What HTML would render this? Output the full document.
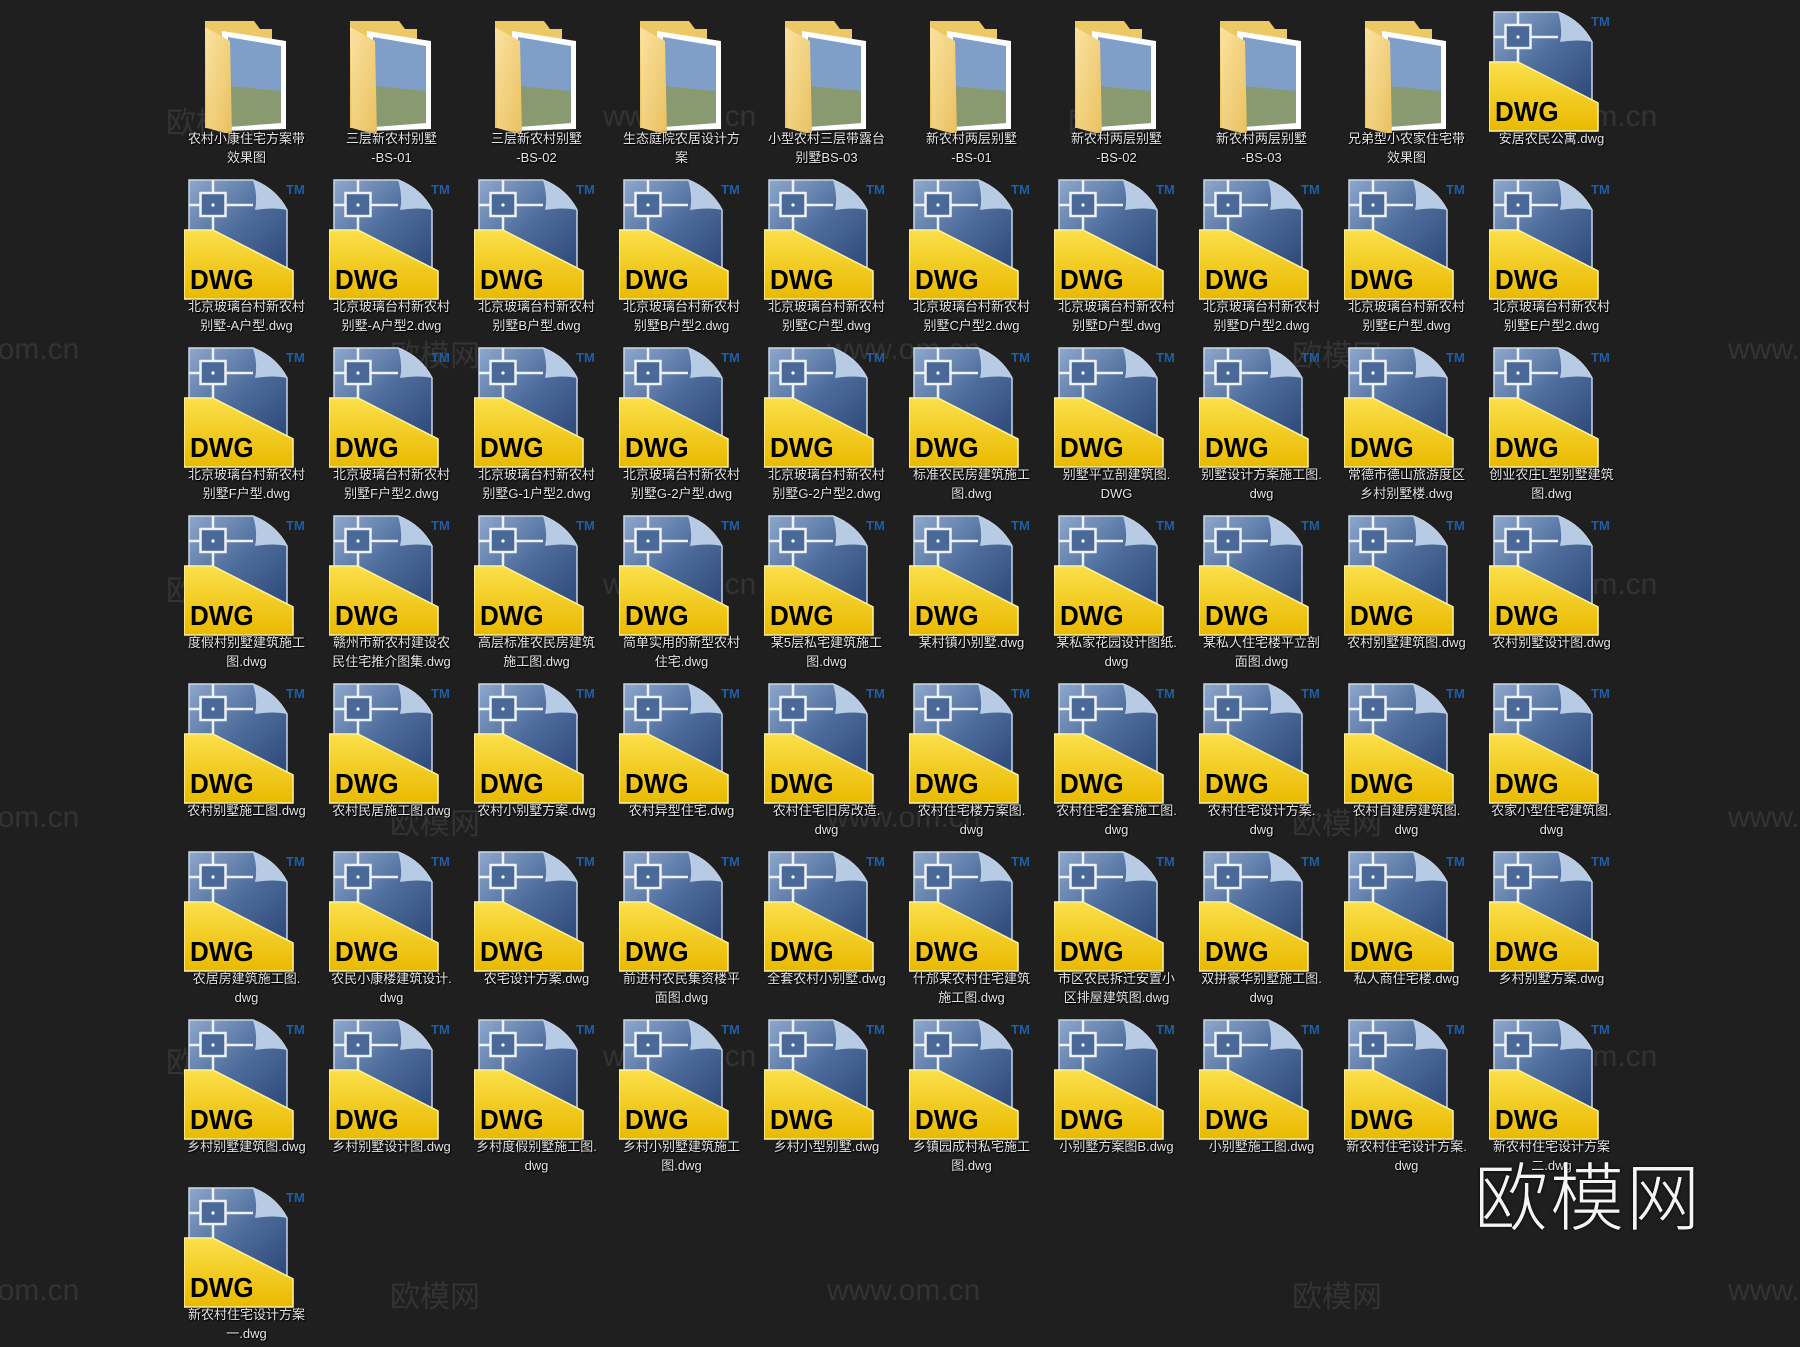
<!DOCTYPE html>
<html><head><meta charset="utf-8">
<style>
html,body{margin:0;padding:0}
body{width:1800px;height:1347px;background:#1f1f1f;position:relative;overflow:hidden;font-family:"Liberation Sans","Noto Sans CJK SC",sans-serif}
.it{position:absolute;width:145px;height:160px}
.ic{position:absolute;left:10px;top:0;width:128px;height:122px}
.dw{position:absolute;left:16px;top:86px;font:bold 28px "Liberation Sans",sans-serif;color:#000;line-height:30px;transform:scaleX(0.93);transform-origin:left}
.tm{position:absolute;left:112px;top:3px;font:bold 13px "Liberation Sans",sans-serif;color:#1d5ea8}
.lb{position:absolute;left:0;top:118px;width:145px;text-align:center;font-size:13px;line-height:19px;color:#e4e4e4;text-shadow:0 0 2px #000,1px 1px 1px #000;white-space:nowrap}
.wm{position:absolute;font-size:30px;color:rgba(255,255,255,0.09);font-family:"Liberation Sans","Noto Sans CJK SC",sans-serif;white-space:nowrap}
.big{position:absolute;left:1474px;top:1148px;font-size:74px;line-height:90px;color:#f4f4f4;font-family:"Noto Sans CJK SC",sans-serif;font-weight:300;letter-spacing:2px;text-shadow:0 0 3px #000}
</style></head><body>
<svg width="0" height="0" style="position:absolute">
<defs>
<linearGradient id="gb" x1="0" y1="0" x2="1" y2="1"><stop offset="0" stop-color="#8ea8cc"/><stop offset="0.5" stop-color="#4d6c9c"/><stop offset="1" stop-color="#2b4677"/></linearGradient>
<linearGradient id="gy" x1="0" y1="0" x2="0" y2="1"><stop offset="0" stop-color="#fbe04a"/><stop offset="1" stop-color="#e9b900"/></linearGradient>
<linearGradient id="gf" x1="0" y1="0" x2="1" y2="1"><stop offset="0" stop-color="#fbe3a0"/><stop offset="1" stop-color="#e9c060"/></linearGradient>
<symbol id="d" viewBox="0 0 128 122">
<path d="M5 1H69Q92 10 103 31V95H5Z" fill="url(#gb)" stroke="#c9d6e8" stroke-width="1.5"/>
<path d="M69 1Q74 18 71 31Q90 28 103 31Q92 10 69 1Z" fill="#b8cbe4"/>
<path d="M29 1V51M5 26H69" stroke="#eef2f7" stroke-width="2.5"/>
<rect x="16.5" y="14" width="25" height="23" fill="#4a6898" stroke="#eef2f7" stroke-width="2.5"/>
<circle cx="29" cy="26" r="1.6" fill="#fff"/>
<path d="M0 51H29L109 92V120H0Z" fill="url(#gy)" stroke="#fff3a0" stroke-width="1.5"/>
</symbol>
<symbol id="f" viewBox="0 0 128 122">
<path d="M21 10H70L76 18H88V117H21Z" fill="#efc866"/>
<path d="M38 20L102 30V118L38 120Z" fill="#fff"/>
<path d="M44 26L97 35V112L44 116Z" fill="#7f9fc8"/>
<path d="M44 75L97 80V112L44 116Z" fill="#8a9a70"/>
<path d="M21 16L46 30L48 124L23 117Z" fill="url(#gf)"/>
</symbol>
</defs></svg>

<div class="wm" style="left:166px;top:98px">欧模网</div>
<div class="wm" style="left:603px;top:100px">www.om.cn</div>
<div class="wm" style="left:1068px;top:98px">欧模网</div>
<div class="wm" style="left:1504px;top:100px">www.om.cn</div>
<div class="wm" style="left:-74px;top:333px">www.om.cn</div>
<div class="wm" style="left:390px;top:331px">欧模网</div>
<div class="wm" style="left:827px;top:333px">www.om.cn</div>
<div class="wm" style="left:1292px;top:331px">欧模网</div>
<div class="wm" style="left:1728px;top:333px">www.om.cn</div>
<div class="wm" style="left:166px;top:566px">欧模网</div>
<div class="wm" style="left:603px;top:568px">www.om.cn</div>
<div class="wm" style="left:1068px;top:566px">欧模网</div>
<div class="wm" style="left:1504px;top:568px">www.om.cn</div>
<div class="wm" style="left:-74px;top:801px">www.om.cn</div>
<div class="wm" style="left:390px;top:799px">欧模网</div>
<div class="wm" style="left:827px;top:801px">www.om.cn</div>
<div class="wm" style="left:1292px;top:799px">欧模网</div>
<div class="wm" style="left:1728px;top:801px">www.om.cn</div>
<div class="wm" style="left:166px;top:1038px">欧模网</div>
<div class="wm" style="left:603px;top:1040px">www.om.cn</div>
<div class="wm" style="left:1068px;top:1038px">欧模网</div>
<div class="wm" style="left:1504px;top:1040px">www.om.cn</div>
<div class="wm" style="left:-74px;top:1274px">www.om.cn</div>
<div class="wm" style="left:390px;top:1272px">欧模网</div>
<div class="wm" style="left:827px;top:1274px">www.om.cn</div>
<div class="wm" style="left:1292px;top:1272px">欧模网</div>
<div class="wm" style="left:1728px;top:1274px">www.om.cn</div>

<!-- Row 0 -->
<div class="it" style="left:174px;top:11px"><svg class="ic"><use href="#f"/></svg><div class="lb">农村小康住宅方案带<br>效果图</div></div>
<div class="it" style="left:319px;top:11px"><svg class="ic"><use href="#f"/></svg><div class="lb">三层新农村别墅<br>-BS-01</div></div>
<div class="it" style="left:464px;top:11px"><svg class="ic"><use href="#f"/></svg><div class="lb">三层新农村别墅<br>-BS-02</div></div>
<div class="it" style="left:609px;top:11px"><svg class="ic"><use href="#f"/></svg><div class="lb">生态庭院农居设计方<br>案</div></div>
<div class="it" style="left:754px;top:11px"><svg class="ic"><use href="#f"/></svg><div class="lb">小型农村三层带露台<br>别墅BS-03</div></div>
<div class="it" style="left:899px;top:11px"><svg class="ic"><use href="#f"/></svg><div class="lb">新农村两层别墅<br>-BS-01</div></div>
<div class="it" style="left:1044px;top:11px"><svg class="ic"><use href="#f"/></svg><div class="lb">新农村两层别墅<br>-BS-02</div></div>
<div class="it" style="left:1189px;top:11px"><svg class="ic"><use href="#f"/></svg><div class="lb">新农村两层别墅<br>-BS-03</div></div>
<div class="it" style="left:1334px;top:11px"><svg class="ic"><use href="#f"/></svg><div class="lb">兄弟型小农家住宅带<br>效果图</div></div>
<div class="it" style="left:1479px;top:11px"><svg class="ic"><use href="#d"/></svg><div class="dw">DWG</div><div class="tm">TM</div><div class="lb">安居农民公寓.dwg</div></div>

<!-- Row 1 -->
<div class="it" style="left:174px;top:179px"><svg class="ic"><use href="#d"/></svg><div class="dw">DWG</div><div class="tm">TM</div><div class="lb">北京玻璃台村新农村<br>别墅-A户型.dwg</div></div>
<div class="it" style="left:319px;top:179px"><svg class="ic"><use href="#d"/></svg><div class="dw">DWG</div><div class="tm">TM</div><div class="lb">北京玻璃台村新农村<br>别墅-A户型2.dwg</div></div>
<div class="it" style="left:464px;top:179px"><svg class="ic"><use href="#d"/></svg><div class="dw">DWG</div><div class="tm">TM</div><div class="lb">北京玻璃台村新农村<br>别墅B户型.dwg</div></div>
<div class="it" style="left:609px;top:179px"><svg class="ic"><use href="#d"/></svg><div class="dw">DWG</div><div class="tm">TM</div><div class="lb">北京玻璃台村新农村<br>别墅B户型2.dwg</div></div>
<div class="it" style="left:754px;top:179px"><svg class="ic"><use href="#d"/></svg><div class="dw">DWG</div><div class="tm">TM</div><div class="lb">北京玻璃台村新农村<br>别墅C户型.dwg</div></div>
<div class="it" style="left:899px;top:179px"><svg class="ic"><use href="#d"/></svg><div class="dw">DWG</div><div class="tm">TM</div><div class="lb">北京玻璃台村新农村<br>别墅C户型2.dwg</div></div>
<div class="it" style="left:1044px;top:179px"><svg class="ic"><use href="#d"/></svg><div class="dw">DWG</div><div class="tm">TM</div><div class="lb">北京玻璃台村新农村<br>别墅D户型.dwg</div></div>
<div class="it" style="left:1189px;top:179px"><svg class="ic"><use href="#d"/></svg><div class="dw">DWG</div><div class="tm">TM</div><div class="lb">北京玻璃台村新农村<br>别墅D户型2.dwg</div></div>
<div class="it" style="left:1334px;top:179px"><svg class="ic"><use href="#d"/></svg><div class="dw">DWG</div><div class="tm">TM</div><div class="lb">北京玻璃台村新农村<br>别墅E户型.dwg</div></div>
<div class="it" style="left:1479px;top:179px"><svg class="ic"><use href="#d"/></svg><div class="dw">DWG</div><div class="tm">TM</div><div class="lb">北京玻璃台村新农村<br>别墅E户型2.dwg</div></div>

<!-- Row 2 -->
<div class="it" style="left:174px;top:347px"><svg class="ic"><use href="#d"/></svg><div class="dw">DWG</div><div class="tm">TM</div><div class="lb">北京玻璃台村新农村<br>别墅F户型.dwg</div></div>
<div class="it" style="left:319px;top:347px"><svg class="ic"><use href="#d"/></svg><div class="dw">DWG</div><div class="tm">TM</div><div class="lb">北京玻璃台村新农村<br>别墅F户型2.dwg</div></div>
<div class="it" style="left:464px;top:347px"><svg class="ic"><use href="#d"/></svg><div class="dw">DWG</div><div class="tm">TM</div><div class="lb">北京玻璃台村新农村<br>别墅G-1户型2.dwg</div></div>
<div class="it" style="left:609px;top:347px"><svg class="ic"><use href="#d"/></svg><div class="dw">DWG</div><div class="tm">TM</div><div class="lb">北京玻璃台村新农村<br>别墅G-2户型.dwg</div></div>
<div class="it" style="left:754px;top:347px"><svg class="ic"><use href="#d"/></svg><div class="dw">DWG</div><div class="tm">TM</div><div class="lb">北京玻璃台村新农村<br>别墅G-2户型2.dwg</div></div>
<div class="it" style="left:899px;top:347px"><svg class="ic"><use href="#d"/></svg><div class="dw">DWG</div><div class="tm">TM</div><div class="lb">标准农民房建筑施工<br>图.dwg</div></div>
<div class="it" style="left:1044px;top:347px"><svg class="ic"><use href="#d"/></svg><div class="dw">DWG</div><div class="tm">TM</div><div class="lb">别墅平立剖建筑图.<br>DWG</div></div>
<div class="it" style="left:1189px;top:347px"><svg class="ic"><use href="#d"/></svg><div class="dw">DWG</div><div class="tm">TM</div><div class="lb">别墅设计方案施工图.<br>dwg</div></div>
<div class="it" style="left:1334px;top:347px"><svg class="ic"><use href="#d"/></svg><div class="dw">DWG</div><div class="tm">TM</div><div class="lb">常德市德山旅游度区<br>乡村别墅楼.dwg</div></div>
<div class="it" style="left:1479px;top:347px"><svg class="ic"><use href="#d"/></svg><div class="dw">DWG</div><div class="tm">TM</div><div class="lb">创业农庄L型别墅建筑<br>图.dwg</div></div>

<!-- Row 3 -->
<div class="it" style="left:174px;top:515px"><svg class="ic"><use href="#d"/></svg><div class="dw">DWG</div><div class="tm">TM</div><div class="lb">度假村别墅建筑施工<br>图.dwg</div></div>
<div class="it" style="left:319px;top:515px"><svg class="ic"><use href="#d"/></svg><div class="dw">DWG</div><div class="tm">TM</div><div class="lb">赣州市新农村建设农<br>民住宅推介图集.dwg</div></div>
<div class="it" style="left:464px;top:515px"><svg class="ic"><use href="#d"/></svg><div class="dw">DWG</div><div class="tm">TM</div><div class="lb">高层标准农民房建筑<br>施工图.dwg</div></div>
<div class="it" style="left:609px;top:515px"><svg class="ic"><use href="#d"/></svg><div class="dw">DWG</div><div class="tm">TM</div><div class="lb">简单实用的新型农村<br>住宅.dwg</div></div>
<div class="it" style="left:754px;top:515px"><svg class="ic"><use href="#d"/></svg><div class="dw">DWG</div><div class="tm">TM</div><div class="lb">某5层私宅建筑施工<br>图.dwg</div></div>
<div class="it" style="left:899px;top:515px"><svg class="ic"><use href="#d"/></svg><div class="dw">DWG</div><div class="tm">TM</div><div class="lb">某村镇小别墅.dwg</div></div>
<div class="it" style="left:1044px;top:515px"><svg class="ic"><use href="#d"/></svg><div class="dw">DWG</div><div class="tm">TM</div><div class="lb">某私家花园设计图纸.<br>dwg</div></div>
<div class="it" style="left:1189px;top:515px"><svg class="ic"><use href="#d"/></svg><div class="dw">DWG</div><div class="tm">TM</div><div class="lb">某私人住宅楼平立剖<br>面图.dwg</div></div>
<div class="it" style="left:1334px;top:515px"><svg class="ic"><use href="#d"/></svg><div class="dw">DWG</div><div class="tm">TM</div><div class="lb">农村别墅建筑图.dwg</div></div>
<div class="it" style="left:1479px;top:515px"><svg class="ic"><use href="#d"/></svg><div class="dw">DWG</div><div class="tm">TM</div><div class="lb">农村别墅设计图.dwg</div></div>

<!-- Row 4 -->
<div class="it" style="left:174px;top:683px"><svg class="ic"><use href="#d"/></svg><div class="dw">DWG</div><div class="tm">TM</div><div class="lb">农村别墅施工图.dwg</div></div>
<div class="it" style="left:319px;top:683px"><svg class="ic"><use href="#d"/></svg><div class="dw">DWG</div><div class="tm">TM</div><div class="lb">农村民居施工图.dwg</div></div>
<div class="it" style="left:464px;top:683px"><svg class="ic"><use href="#d"/></svg><div class="dw">DWG</div><div class="tm">TM</div><div class="lb">农村小别墅方案.dwg</div></div>
<div class="it" style="left:609px;top:683px"><svg class="ic"><use href="#d"/></svg><div class="dw">DWG</div><div class="tm">TM</div><div class="lb">农村异型住宅.dwg</div></div>
<div class="it" style="left:754px;top:683px"><svg class="ic"><use href="#d"/></svg><div class="dw">DWG</div><div class="tm">TM</div><div class="lb">农村住宅旧房改造.<br>dwg</div></div>
<div class="it" style="left:899px;top:683px"><svg class="ic"><use href="#d"/></svg><div class="dw">DWG</div><div class="tm">TM</div><div class="lb">农村住宅楼方案图.<br>dwg</div></div>
<div class="it" style="left:1044px;top:683px"><svg class="ic"><use href="#d"/></svg><div class="dw">DWG</div><div class="tm">TM</div><div class="lb">农村住宅全套施工图.<br>dwg</div></div>
<div class="it" style="left:1189px;top:683px"><svg class="ic"><use href="#d"/></svg><div class="dw">DWG</div><div class="tm">TM</div><div class="lb">农村住宅设计方案.<br>dwg</div></div>
<div class="it" style="left:1334px;top:683px"><svg class="ic"><use href="#d"/></svg><div class="dw">DWG</div><div class="tm">TM</div><div class="lb">农村自建房建筑图.<br>dwg</div></div>
<div class="it" style="left:1479px;top:683px"><svg class="ic"><use href="#d"/></svg><div class="dw">DWG</div><div class="tm">TM</div><div class="lb">农家小型住宅建筑图.<br>dwg</div></div>

<!-- Row 5 -->
<div class="it" style="left:174px;top:851px"><svg class="ic"><use href="#d"/></svg><div class="dw">DWG</div><div class="tm">TM</div><div class="lb">农居房建筑施工图.<br>dwg</div></div>
<div class="it" style="left:319px;top:851px"><svg class="ic"><use href="#d"/></svg><div class="dw">DWG</div><div class="tm">TM</div><div class="lb">农民小康楼建筑设计.<br>dwg</div></div>
<div class="it" style="left:464px;top:851px"><svg class="ic"><use href="#d"/></svg><div class="dw">DWG</div><div class="tm">TM</div><div class="lb">农宅设计方案.dwg</div></div>
<div class="it" style="left:609px;top:851px"><svg class="ic"><use href="#d"/></svg><div class="dw">DWG</div><div class="tm">TM</div><div class="lb">前进村农民集资楼平<br>面图.dwg</div></div>
<div class="it" style="left:754px;top:851px"><svg class="ic"><use href="#d"/></svg><div class="dw">DWG</div><div class="tm">TM</div><div class="lb">全套农村小别墅.dwg</div></div>
<div class="it" style="left:899px;top:851px"><svg class="ic"><use href="#d"/></svg><div class="dw">DWG</div><div class="tm">TM</div><div class="lb">什邡某农村住宅建筑<br>施工图.dwg</div></div>
<div class="it" style="left:1044px;top:851px"><svg class="ic"><use href="#d"/></svg><div class="dw">DWG</div><div class="tm">TM</div><div class="lb">市区农民拆迁安置小<br>区排屋建筑图.dwg</div></div>
<div class="it" style="left:1189px;top:851px"><svg class="ic"><use href="#d"/></svg><div class="dw">DWG</div><div class="tm">TM</div><div class="lb">双拼豪华别墅施工图.<br>dwg</div></div>
<div class="it" style="left:1334px;top:851px"><svg class="ic"><use href="#d"/></svg><div class="dw">DWG</div><div class="tm">TM</div><div class="lb">私人商住宅楼.dwg</div></div>
<div class="it" style="left:1479px;top:851px"><svg class="ic"><use href="#d"/></svg><div class="dw">DWG</div><div class="tm">TM</div><div class="lb">乡村别墅方案.dwg</div></div>

<!-- Row 6 -->
<div class="it" style="left:174px;top:1019px"><svg class="ic"><use href="#d"/></svg><div class="dw">DWG</div><div class="tm">TM</div><div class="lb">乡村别墅建筑图.dwg</div></div>
<div class="it" style="left:319px;top:1019px"><svg class="ic"><use href="#d"/></svg><div class="dw">DWG</div><div class="tm">TM</div><div class="lb">乡村别墅设计图.dwg</div></div>
<div class="it" style="left:464px;top:1019px"><svg class="ic"><use href="#d"/></svg><div class="dw">DWG</div><div class="tm">TM</div><div class="lb">乡村度假别墅施工图.<br>dwg</div></div>
<div class="it" style="left:609px;top:1019px"><svg class="ic"><use href="#d"/></svg><div class="dw">DWG</div><div class="tm">TM</div><div class="lb">乡村小别墅建筑施工<br>图.dwg</div></div>
<div class="it" style="left:754px;top:1019px"><svg class="ic"><use href="#d"/></svg><div class="dw">DWG</div><div class="tm">TM</div><div class="lb">乡村小型别墅.dwg</div></div>
<div class="it" style="left:899px;top:1019px"><svg class="ic"><use href="#d"/></svg><div class="dw">DWG</div><div class="tm">TM</div><div class="lb">乡镇园成村私宅施工<br>图.dwg</div></div>
<div class="it" style="left:1044px;top:1019px"><svg class="ic"><use href="#d"/></svg><div class="dw">DWG</div><div class="tm">TM</div><div class="lb">小别墅方案图B.dwg</div></div>
<div class="it" style="left:1189px;top:1019px"><svg class="ic"><use href="#d"/></svg><div class="dw">DWG</div><div class="tm">TM</div><div class="lb">小别墅施工图.dwg</div></div>
<div class="it" style="left:1334px;top:1019px"><svg class="ic"><use href="#d"/></svg><div class="dw">DWG</div><div class="tm">TM</div><div class="lb">新农村住宅设计方案.<br>dwg</div></div>
<div class="it" style="left:1479px;top:1019px"><svg class="ic"><use href="#d"/></svg><div class="dw">DWG</div><div class="tm">TM</div><div class="lb">新农村住宅设计方案<br>二.dwg</div></div>

<!-- Row 7 -->
<div class="it" style="left:174px;top:1187px"><svg class="ic"><use href="#d"/></svg><div class="dw">DWG</div><div class="tm">TM</div><div class="lb">新农村住宅设计方案<br>一.dwg</div></div>

<div class="big">欧模网</div>
</body></html>
